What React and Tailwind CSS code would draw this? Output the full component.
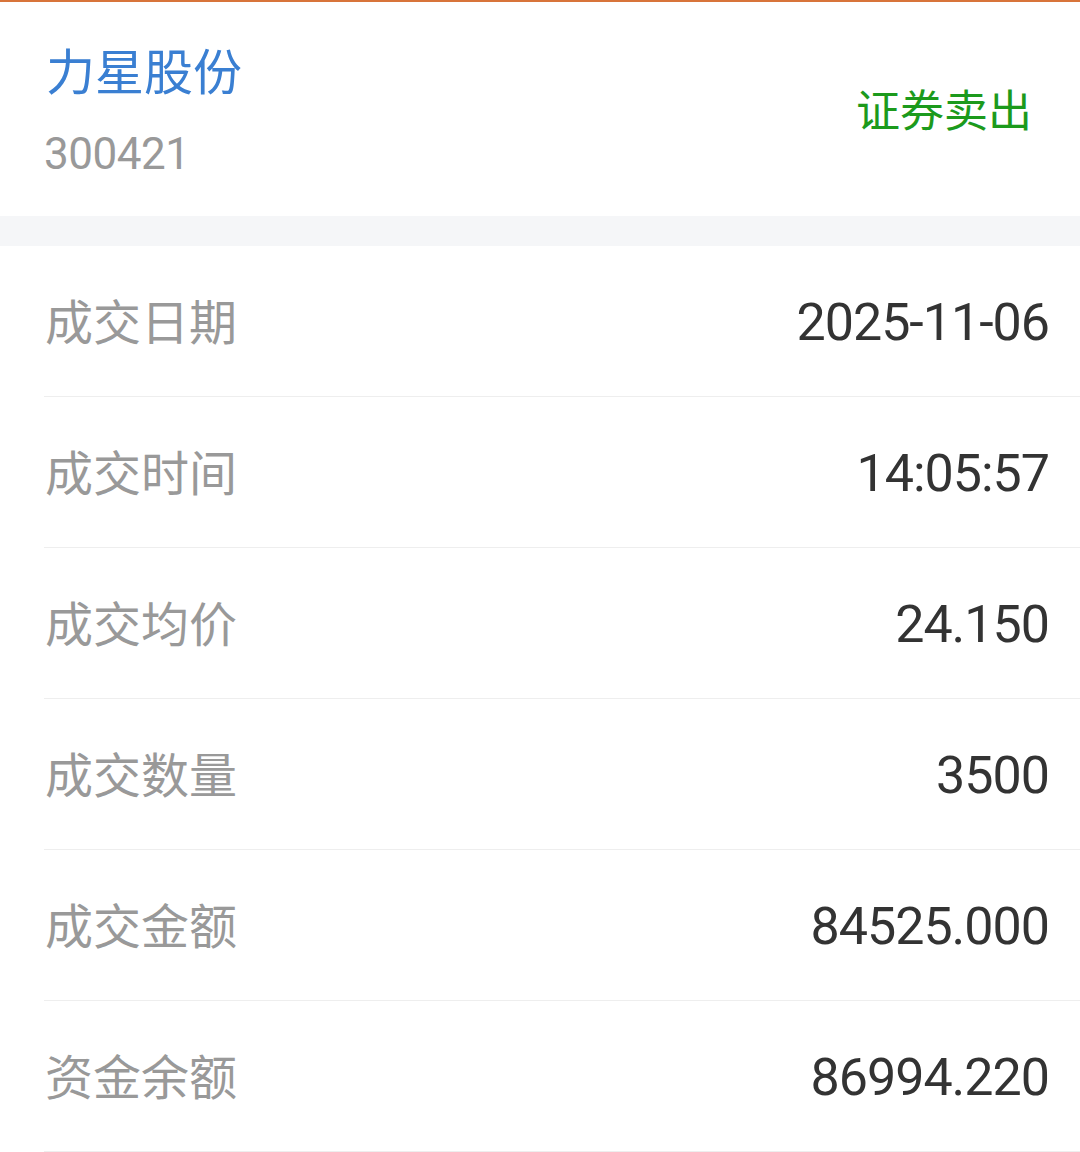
import React from "react";

const rows = [
  ["成交日期", "2025-11-06"],
  ["成交时间", "14:05:57"],
  ["成交均价", "24.150"],
  ["成交数量", "3500"],
  ["成交金额", "84525.000"],
  ["资金余额", "86994.220"],
];

const cjk = { fontFamily: '"Noto Sans CJK SC", "Noto Sans", sans-serif' };
const num = { fontFamily: 'Roboto, "Noto Sans CJK SC", sans-serif' };

export default function App() {
  return (
    <div className="w-[1080px] h-[1152px] bg-white overflow-hidden" style={cjk}>
      <div className="h-[2px] bg-[#d8743a]" />
      <div className="h-[214px] flex items-center justify-between pl-[46px] pr-[48px]">
        <div className="flex flex-col">
          <div className="text-[49px] leading-[49px] text-[#3a7fd2] mt-[2px]">力星股份</div>
          <div className="text-[44px] leading-[44px] text-[#999999] mt-[39px] tracking-[-0.5px] ml-[-2px]" style={num}>300421</div>
        </div>
        <div className="text-[44px] leading-[44px] text-[#1c9a1c] mt-[-2px]">证券卖出</div>
      </div>
      <div className="h-[30px] bg-[#f5f6f8]" />
      <div className="flex flex-col">
        {rows.map(([k, v]) => (
          <div key={k} className="h-[151px] ml-[44px] pr-[31px] border-b border-[#eeeeee] flex items-center justify-between">
            <span className="text-[48px] leading-[48px] text-[#999999] pl-[1px] mt-[-4px]">{k}</span>
            <span className="text-[52px] leading-[52px] text-[#333333] tracking-[-1px] mt-[3px]" style={num}>{v}</span>
          </div>
        ))}
      </div>
    </div>
  );
}
